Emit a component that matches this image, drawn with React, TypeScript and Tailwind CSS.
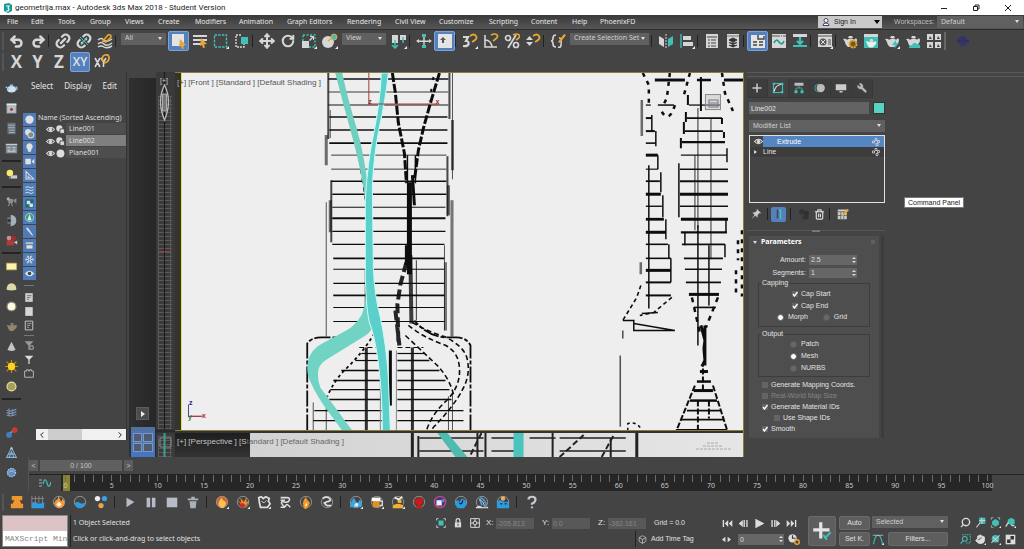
import React from 'react';
import { Link2, Undo2, Redo2, Box, Wrench, Move, RotateCw, Trash2, Hand, Search, Snowflake } from 'lucide-react';

const LIGHT = '#d6d6d6';
const TEAL = '#3fc1b8';
const GOLD = '#e8a634';

/* 16x16 drawings, keyed by name */
const teapot = (body: string) => (
  <path d="M1 6q3-1 4 1c2-2 6-2 7 0 1-2 3-2 3 0 0 3-2 4-3 5l-2 2H6L4 12C3 10 3 8 1 6zM7 3h3l1 2H6z" fill={body} />
);

function Link2Tilt() {
  return <g transform="rotate(-45 8 8)"><Link2 x={-1} y={-1} width={18} height={18} color={LIGHT} strokeWidth={3} /></g>;
}

const icons: Record<string, React.ReactNode> = {
  undo: <Undo2 x={0} y={1} width={15} height={15} color={LIGHT} strokeWidth={4} />,
  redo: <Redo2 x={1} y={1} width={15} height={15} color={LIGHT} strokeWidth={4} />,
  link: <Link2Tilt />,
  unlink: <><Link2Tilt /><path d="M3 2l10 12" stroke="#444" strokeWidth="3" /><path d="M4 4l8 8M5 12l6-8" stroke={TEAL} /></>,
  bind: <><path d="M1 7q3-3 6 0t8-1M1 11q3-3 6 0t8-1M1 14q3-2 6 0t8-1" fill="none" stroke={LIGHT} strokeWidth="1.500" /><path d="M6 8l5-6q3-1 3 2l-5 5z" fill="none" stroke={GOLD} strokeWidth="1.600" /></>,
  select: <><path d="M1 1h12v12H1z" fill="#e4e4e4" /><path d="M9 6l6 6-3 .5 1 3-2 .5-1-3-2 1z" fill={GOLD} /></>,
  byName: <><path d="M1 2h14v2H1zM1 6h14v2H1zM1 10h9v2H1z" fill={LIGHT} /><path d="M9 5l6 6-3 .5 1 3-2 .5-1-3-2 1z" fill={GOLD} /></>,
  region: <><rect x="1.500" y="2" width="12" height="12" fill="none" stroke={TEAL} strokeDasharray="2.500 1.200" strokeWidth="1.400" /><path d="M16 13v3h-3z" fill="#eee" /></>,
  crossing: <><path d="M7 2H2v12h8v-3" fill="none" stroke={LIGHT} strokeDasharray="2 1" strokeWidth="1.400" /><path d="M7 4h7v7H7z" fill={TEAL} /></>,
  move: <Move x={0} y={0} width={16} height={16} color={LIGHT} strokeWidth={3} />,
  rotate: <RotateCw x={1} y={1} width={14} height={14} color={LIGHT} strokeWidth={3.5} />,
  scale: <><path d="M2 2h12v12H2z" fill="none" stroke={TEAL} strokeDasharray="2 1.500" strokeWidth="1.400" /><path d="M1 8h7v7H1zM9 3h4v4h-1V5L9 8 8 7l3-3H9z" fill={LIGHT} /><path d="M16 13v3h-3z" fill="#eee" /></>,
  place: <><circle cx="6" cy="9" r="6" fill={LIGHT} /><path d="M6 8l5-4" stroke={GOLD} strokeWidth="1.500" /><circle cx="12" cy="4" r="3" fill={TEAL} stroke={GOLD} /><path d="M16 13v3h-3z" fill="#eee" /></>,
  pivot: <><path d="M1 2h6v8H1zM9 2h6v5H9z" fill={LIGHT} /><path d="M4 7v7M1 12l3 3 3-3M12 4v6" fill="none" stroke={TEAL} strokeWidth="1.500" /><path d="M16 13v3h-3z" fill="#eee" /></>,
  manipulate: <><path d="M0 8l3-2v4zM16 8l-3-2v4zM3 7.500h10v1.500H3z" fill={LIGHT} /><path d="M8 4v9" stroke={LIGHT} strokeWidth="1.400" /><path d="M6 1h4v3H6zM6 12h4v3H6z" fill={TEAL} /></>,
  keyboard: <><path d="M1 1h14v14H1z" fill="#e4e4e4" /><path d="M6 4l3 3H7v3H5V7H3z" fill="#555" /></>,
  snap: <><path d="M1 4h5L4 8c4 0 4 6-3 5" fill="none" stroke={LIGHT} strokeWidth="2.200" /><path d="M8 3q4-3 6 0t-4 6" fill="none" stroke={GOLD} strokeWidth="1.800" /><path d="M16 13v3h-3z" fill="#eee" /></>,
  angle: <><path d="M2 2v12h12M2 7q6 0 7 7" fill="none" stroke={LIGHT} strokeWidth="1.600" /><path d="M8 2q4-2 6 0t-4 6" fill="none" stroke={GOLD} strokeWidth="1.700" /></>,
  percent: <><path d="M12 2L4 15" stroke={LIGHT} strokeWidth="1.800" /><circle cx="4" cy="5" r="2.500" fill="none" stroke={LIGHT} strokeWidth="1.700" /><circle cx="12" cy="12" r="2.500" fill="none" stroke={LIGHT} strokeWidth="1.700" /><path d="M9 2q4-2 6 0t-3 5" fill="none" stroke={GOLD} strokeWidth="1.700" /></>,
  spinner: <><path d="M1 7l3.500-4L8 7zM1 9l3.500 4L8 9z" fill={LIGHT} /><path d="M8 3q4-3 6 0t-4 6" fill="none" stroke={GOLD} strokeWidth="1.800" /></>,
  braces: <><path d="M6 2q-3 0-3 3t-2 3q2 0 2 3t3 3M9 5q2 0 2 2t1 2q-1 0-1 3t-3 2" fill="none" stroke={LIGHT} strokeWidth="1.600" /><path d="M8 9l6-8 2 1-6 8z" fill={GOLD} /></>,
  mirror: <><path d="M1 3l5 3v8L1 11z" fill={LIGHT} /><path d="M8 1v14" stroke={LIGHT} strokeDasharray="2 1" /><path d="M15 3l-5 3v8l5-3z" fill={TEAL} /></>,
  align: <><path d="M2 1v14" stroke={TEAL} strokeWidth="1.400" /><path d="M4 3h8v4H4zM4 9h10v4H4z" fill={LIGHT} /><path d="M16 13v3h-3z" fill="#eee" /></>,
  list: <><path d="M2 1h12v14H2z" fill={LIGHT} /><path d="M3 4h10M4 7h2m1 0h5M4 10h2m1 0h5M4 13h2m1 0h5" stroke="#444" /></>,
  layers: <><path d="M2 1h12v14H2z" fill={LIGHT} /><path d="M2 3h12" stroke="#777" /><path d="M8 5l4 2-4 2-4-2zM4 9.500l4 2 4-2M4 12l4 2 4-2" fill="#333" stroke="#333" /></>,
  ribbon: <><path d="M1 2h14v13H1z" fill="#e4e4e4" /><path d="M8 2v4h6V3M3 9h4m2 0h4M3 12h4m2 0h4" stroke="#444" fill="none" strokeWidth="1.400" /></>,
  curve: <><path d="M1 1h14v14H1z" fill={LIGHT} /><path d="M1 3h14" stroke="#555" strokeDasharray="8 1 1 1" /><path d="M3 10q2-5 5-1t5-1" fill="none" stroke="#1f9c94" strokeWidth="1.700" /></>,
  schematic: <><path d="M1 1h14v3H1z" fill={LIGHT} /><path d="M8 4v7M5 8l3 3 3-3M1 13h14" fill="none" stroke={TEAL} strokeWidth="2.200" /></>,
  material: <><path d="M1 1h14v13H1z" fill={LIGHT} /><path d="M1 3h14M11 7h3m-3 2h3m-3 2h3" stroke="#555" /><circle cx="6" cy="9" r="3.500" fill="#555" /><path d="M4 7l4 4M8 7l-4 4" stroke="#ddd" /><path d="M16 13v3h-3z" fill="#eee" /></>,
  renderSetup: <>{teapot(LIGHT)}<circle cx="11" cy="11" r="3.500" fill="#7a5a1c" stroke={GOLD} strokeWidth="2" strokeDasharray="2 .7" /></>,
  renderFrame: <><path d="M1 1h14v14H1z" fill={TEAL} /><path d="M1 1h14v3H1z" fill={LIGHT} /><g transform="translate(2 4) scale(.75)">{teapot('#eee')}</g></>,
  render: <>{teapot(LIGHT)}<path d="M12 7l-4 5h3l-1 4 5-6h-3z" fill={TEAL} /><path d="M16 13v3h-3z" fill="#eee" /></>,
  renderCloud: <>{teapot(LIGHT)}<path d="M4 15q0-3 3-3 2-4 5-1 4 0 3 4z" fill={TEAL} /></>,
  gallery: <><path d="M1 1h6v6H1zM9 1h6v6H9zM1 9h6v6H1zM9 9h6v6H9z" fill={LIGHT} /><path d="M3 6l1-3 2 3zM11 6l1-3 2 3zM3 14l1-3 2 3zM11 14l1-3 2 3z" fill="#444" /></>,
  wave: <path d="M3 6v4M5 4v8M7 3v11M9 3v10M11 5v7M13 7v3M2 8h12" stroke="#2c2c72" strokeWidth="1.200" />,
};

const Svg = ({ children, className = 'w-4 h-4' }: { children: React.ReactNode; className?: string }) => (
  <svg viewBox="0 0 16 16" className={`${className} shrink-0`} aria-hidden="true">{children}</svg>
);

const ToolButton = ({ name, active }: { name: string; active?: boolean }) => (
  <button
    aria-label={name}
    className={`w-[21px] h-5 shrink-0 flex items-center justify-center rounded-xs border ${active ? 'bg-[#5480bd] border-[#7ba3d8]' : 'border-transparent'}`}
  >
    <Svg>{icons[name]}</Svg>
  </button>
);

const Sep = () => <span className="w-1 h-3 shrink-0 border-l border-[#222]" />;

const Select = ({ label, value, className }: { label: string; value: string; className: string }) => (
  <div className={`relative shrink-0 text-[7px] ${className}`}>
    <select aria-label={label} className="block appearance-none w-full h-full bg-[#606060] text-[#cfcfcf] pl-1 outline-none">
      <option>{value}</option>
    </select>
    <span className="absolute right-1 top-1/2 -mt-0.5 border-x-2 border-x-transparent border-t-3 border-t-[#ddd] pointer-events-none" />
  </div>
);

const menus = [
  ['File', 'w-6'], ['Edit', 'w-[27px]'], ['Tools', 'w-8'], ['Group', 'w-[35px]'], ['Views', 'w-[33px]'], ['Create', 'w-[37px]'],
  ['Modifiers', 'w-11'], ['Animation', 'w-12'], ['Graph Editors', 'w-[60px]'], ['Rendering', 'w-12'], ['Civil View', 'w-11'],
  ['Customize', 'w-[50px]'], ['Scripting', 'w-[42px]'], ['Content', 'w-[41px]'], ['Help', 'w-7'], ['PhoenixFD', 'w-12'],
];

function TitleBar() {
  return (
    <header className="h-[15px] bg-white text-[#222] flex items-center pl-1 shrink-0 font-['Roboto'] text-[8px]">
      <svg viewBox="0 0 8 10" className="w-2 h-[10px] mr-[3px]"><path d="M0 1l5-1 3 2v6l-4 2-4-2z" fill="#159a94" /><path d="M2 3h3L4 5q2 1 0 3H2" fill="none" stroke="#fff" strokeWidth="1.200" /></svg>
      <h1>geometrija.max - Autodesk 3ds Max 2018 - Student Version</h1>
      <div className="ml-auto mr-3 flex gap-6">
        <button aria-label="Minimize"><svg viewBox="0 0 8 8" className="w-2 h-2"><path d="M1 4.500h6" stroke="#222" /></svg></button>
        <button aria-label="Restore"><svg viewBox="0 0 8 8" className="w-2 h-2"><path d="M1.500 2.500h4v4h-4zM3 2V1h4v4H6" fill="none" stroke="#222" /></svg></button>
        <button aria-label="Close"><svg viewBox="0 0 8 8" className="w-2 h-2"><path d="M1 1l6 6M7 1L1 7" stroke="#222" /></svg></button>
      </div>
    </header>
  );
}

function MenuBar() {
  return (
    <nav className="h-[15px] shrink-0 flex items-center bg-linear-to-b from-[#3a3a3a] to-[#565656] border-b border-[#2c2c2c] pl-[7px] font-['Noto_Sans'] text-[7px] text-[#e8e8e8]">
      {menus.map(([name, width]) => (
        <button key={name} className={`${width} shrink-0 text-left whitespace-nowrap`}>{name}</button>
      ))}
      <button className="ml-auto shrink-0 w-16 h-3 bg-[#c9c9c9] text-[#222] flex items-center pl-1 font-['Liberation_Sans']">
        <Svg className="w-2 h-2 mr-1"><circle cx="8" cy="5" r="4" fill="#fff" stroke="#446" strokeWidth="2" /><path d="M2 15q0-5 6-5t6 5z" fill="#fff" stroke="#446" strokeWidth="2" /></Svg>
        Sign In
        <span className="ml-auto mr-0.5 border-x-3 border-x-transparent border-t-4 border-t-black" />
      </button>
      <span className="ml-3 w-[43px] shrink-0 text-[#bdbdbd] font-['Liberation_Sans']">Workspaces:</span>
      <Select label="Workspaces" value="Default" className="w-[86px] h-3 mr-px" />
    </nav>
  );
}

function MainToolbar() {
  const group = (...names: string[]) => names.map((n) => <ToolButton key={n} name={n} active={n === 'select' || n === 'keyboard' || n === 'ribbon'} />);
  return (
    <div className="shrink-0 font-['Noto_Sans']">
      <div className="h-[21px] flex items-center pl-0.5">
        <span className="w-1 h-[18px] shrink-0 border-l-2 border-[#555]" />
        {group('undo', 'redo')}<Sep />
        {group('link', 'unlink', 'bind')}<Sep />
        <Select label="Selection filter" value="All" className="w-[45px] h-3 mx-0.5 mb-1" />
        {group('select', 'byName', 'region', 'crossing')}<Sep />
        {group('move', 'rotate', 'scale', 'place')}
        <Select label="Reference coordinates" value="View" className="w-11 h-3 mx-0.5 mb-1" />
        {group('pivot')}<Sep />
        {group('manipulate', 'keyboard')}<Sep />
        {group('snap', 'angle', 'percent', 'spinner')}<Sep />
        {group('braces')}
        <Select label="Selection sets" value="Create Selection Set" className="w-[79px] h-3 mx-0.5 mb-1" />
        <Sep />
        {group('mirror', 'align')}<Sep />
        {group('list', 'layers')}<Sep />
        {group('ribbon', 'curve', 'schematic')}<Sep />
        {group('material')}<Sep />
        {group('renderSetup', 'renderFrame', 'render', 'renderCloud', 'gallery')}
        <span className="w-1 h-[18px] shrink-0 border-l-2 border-[#666] mr-1" />
        {group('wave')}
      </div>
      <div className="h-[21px] flex items-center pl-0.5 font-['Open_Sans'] font-bold text-[17px] leading-5 text-[#d6d6d6]">
        <span className="w-1 h-[18px] border-l-2 border-[#555]" />
        <button className="w-[21px]">X</button>
        <button className="w-[21px]">Y</button>
        <button className="w-[22px]">Z</button>
        <button className="w-5 h-5 bg-[#5480bd] border border-[#7ba3d8] rounded-xs text-[12px] leading-4 font-semibold text-[#e4e4e4]">XY</button>
        <button aria-label="Snap constraint" className="w-[21px] ml-px flex justify-center">
          <Svg><path d="M1 4l5 9M6 4l-5 9M7 4l2.500 4L12 4M9.500 8v5" fill="none" stroke={LIGHT} strokeWidth="1.600" /><path d="M9 8q-2-6 2-7t4 3-5 5" fill="none" stroke={GOLD} strokeWidth="1.800" /></Svg>
        </button>
      </div>
    </div>
  );
}

const disc = (fill: string, stroke: string) => <circle cx="8" cy="8" r="5.500" fill={fill} stroke={stroke} strokeWidth="1.500" />;

const sideGroups: React.ReactNode[][] = [
  [
    <><ellipse cx="8" cy="9" rx="5.500" ry="4" fill="#c9e4f1" /><path d="M1 6l4 3M13 6q3 0 1 4M6 4h4" stroke="#8fc0dc" strokeWidth="1.600" fill="none" /></>,
    <><path d="M2 2h12v12H2z" fill="#a9b4c0" /><path d="M2 2h12v2H2z" fill="#e3e8ee" /><path d="M4 6h8v6H4z" fill="#c4c4c4" /><circle cx="8" cy="9" r="2" fill="#a04545" /></>,
    <><path d="M3 1h10v14H3z" fill="#68727c" /><path d="M4 4h8M4 7h8M5 10h7M5 13h7" stroke="#b4bec8" /></>,
    <><path d="M1 2h14v12H1z" fill="#7d8791" /><path d="M1 3h14M3 7h4m2 0h4M3 10h4m2 0h4M3 12h10" stroke="#dce2e8" /></>,
  ],
  [<><circle cx="6" cy="6" r="4" fill="#f6ec6a" /><path d="M7 9h8v4H7z" fill="#c9c9c9" /><path d="M5 10h2v3H5z" fill="#8a8a8a" /></>],
  [
    <><path d="M4 6h6v5H4zM10 8l4-3v7z" fill="#8c8c8c" /><circle cx="4" cy="6" r="2" fill="#aaa" /><path d="M6 11l-2 4m4-4l1 4" stroke="#aaa" /></>,
    <><path d="M7 1a7 7 0 010 14z" fill="#a7b0b8" /><path d="M7 4H3v8h4" fill="#6d767e" /><circle cx="5" cy="8" r="2" fill="#333" /></>,
    <><path d="M2 8h9v6H2z" fill="#b83838" /><circle cx="5" cy="5" r="3" fill="#c98d8d" /><circle cx="11" cy="5" r="3" fill="#9b2f2f" /><path d="M11 10l4-2v5z" fill="#ccc" /></>,
  ],
  [
    <path d="M2 4h12v8H2z" fill="#faf3b4" stroke="#cfbf5a" />,
    <path d="M2 12q0-8 6-8t6 8q-6 2-12 0z" fill="#dcd9a4" />,
    disc('#fffde0', '#8a8a80'),
    <g transform="translate(1 1) scale(.9)">{teapot('#8f886c')}</g>,
    <path d="M8 2l5 10q-5 3-10 0z" fill="#c4c4c4" />,
    <><path d="M8 0v16M0 8h16M2 2l12 12M14 2L2 14" stroke="#c98a12" strokeWidth="1.500" /><circle cx="8" cy="8" r="4.500" fill="#ffd21f" /></>,
    disc('#a89f5a', '#e6dda0'),
  ],
  [
    <path d="M2 5q4 3 12-1M2 8q4 3 12-1M2 11q4 3 12-1M5 3v10M9 4v9" fill="none" stroke="#7e9bbb" strokeWidth="1.300" />,
    <><path d="M5 10l6-5" stroke="#999" strokeWidth="2" /><circle cx="5" cy="11" r="3.500" fill="#3f7fc4" /><circle cx="12" cy="5" r="3.500" fill="#c23c34" /></>,
    <><path d="M8 2L2 14h12zM4 10h8M5 14l3-7 3 7" fill="none" stroke="#89b1cf" strokeWidth="1.300" /><circle cx="8" cy="3" r="1.500" fill="#9cc4e0" /></>,
    <><circle cx="8" cy="8" r="5" fill="#5c8cc0" stroke="#a8c8e4" strokeWidth="1.500" strokeDasharray="2 1" /><path d="M5 8q3-4 6 0" stroke="#c8dcec" fill="none" /></>,
  ],
];

const circles = <><circle cx="6" cy="6" r="4.500" fill="#ddd" /><circle cx="10" cy="10" r="4.500" fill="#888" stroke="#eee" strokeWidth="1.300" /></>;

/* shape node in the object list */
const splineMark = <><circle cx="6" cy="6" r="5.500" fill="#ddd" /><path d="M7 7h8v8H7z" fill="#ddd" stroke="#444" strokeWidth="1.500" /></>;

const filters: React.ReactNode[] = [
  <circle cx="8" cy="8" r="6" fill="#e0e0e0" />,
  circles,
  <path d="M8 2a4.500 4.500 0 013 8l-1 4H6l-1-4a4.500 4.500 0 013-8z" fill="#e0e0e0" />,
  <path d="M2 4h8v8H2zM11 8l4-4v8z" fill="#e0e0e0" />,
  <path d="M3 2v11h11zM6 8v3h3" fill="none" stroke="#e0e0e0" strokeWidth="1.500" />,
  <path d="M2 5q3-2 6 0t6-1M2 9q3-2 6 0t6-1M2 13q3-2 6 0t6-1" fill="none" stroke="#e0e0e0" strokeWidth="1.400" />,
  <><path d="M2 2h12v12H2z" fill="#1d6a78" /><path d="M4 4h5v5H4zM8 8h5v5H8z" fill="#ddd" /></>,
  <><circle cx="8" cy="8" r="6" fill="#3b9a84" stroke="#cfe5df" /><path d="M8 3l3 9H5z" fill="#e8e8e8" /></>,
  <path d="M3 2l3 1 7 10-1 1-8-9z" fill="#e0e0e0" />,
  <path d="M2 3h12v3H2zM3 7h10v6H3z" fill="#e0e0e0" stroke="#4b6e9e" />,
  <Snowflake x={1} y={1} width={14} height={14} color="#e0e0e0" strokeWidth={2} />,
  <><path d="M1 8q7-8 14 0-7 8-14 0z" fill="#e0e0e0" /><circle cx="8" cy="8" r="2.500" fill="#345" /></>,
];

const Eye = () => <Svg className="w-[9px] h-[9px]"><path d="M1 8q7-8 14 0-7 8-14 0z" fill="none" stroke="#ddd" strokeWidth="2" /><circle cx="8" cy="8" r="3" fill="#ddd" /></Svg>;

function SideBar() {
  return (
    <aside className="w-[22px] shrink-0 flex flex-col items-center pt-1.5">
      {sideGroups.map((g, i) => (
        <React.Fragment key={i}>
          {i > 0 && <hr className="w-[19px] h-0 my-0.5 border-0 border-t-2 border-[#242424] shrink-0" />}
          {g.map((icon, j) => (
            <button key={j} aria-label={`Create tool ${i + 1}.${j + 1}`} className="h-5 flex items-center shrink-0"><Svg className="w-[13px] h-[13px]">{icon}</Svg></button>
          ))}
        </React.Fragment>
      ))}
    </aside>
  );
}

function SceneExplorer() {
  const rows = [['Line001', true], ['Line002', true], ['Plane001', false]] as const;
  return (
    <section className="w-[105px] shrink-0 flex flex-col border-r border-[#333] mb-[17px]">
      <div className="h-[41px] pt-[9px] pl-[9px] flex gap-[11px] font-['Noto_Sans'] text-[8px] leading-[10px] text-[#e4e4e4]">
        <button className="self-start">Select</button>
        <button className="self-start">Display</button>
        <button className="self-start">Edit</button>
      </div>
      <div className="flex-1 flex min-h-0">
        <div className="w-[14px] shrink-0 flex flex-col items-center gap-px">
          {filters.map((icon, i) => (
            <button key={i} aria-label={`Filter ${i + 1}`} className="w-[13px] h-[13px] shrink-0 bg-[#4f7cb8] flex items-center justify-center"><Svg className="w-[11px] h-[11px]">{icon}</Svg></button>
          ))}
          <hr className="w-[10px] border-[#777] my-1" />
          <Svg className="w-[10px] h-[13px]"><path d="M2 1h12v14H2z" fill="#ccc" /><path d="M5 5h7M5 8h5M5 11h3" stroke="#444" /></Svg>
          <Svg className="w-[10px] h-[13px]"><path d="M2 1h12v14H2z" fill="#d6d6d6" /></Svg>
          <Svg className="w-[10px] h-[13px]"><path d="M2 1h12v14H2z" fill="none" stroke="#ccc" strokeWidth="1.500" /><path d="M5 5h7M5 8h5M5 11h3" stroke="#ccc" /></Svg>
          <hr className="w-[10px] border-[#777] my-0.5" />
          <Svg className="w-[10px] h-[13px]"><path d="M1 1h14L9 8v7H7V8z" fill="#999" /><circle cx="12" cy="11" r="3" fill="none" stroke="#999" strokeWidth="2" /></Svg>
          <Svg className="w-[10px] h-[13px]"><path d="M1 2h14L9 8v7H7V8z" fill="#ddd" /></Svg>
          <Svg className="w-[10px] h-[13px]"><path d="M1 4h3V2h3v2h2V2h3v2h3v10H1z" fill="none" stroke="#bbb" strokeWidth="1.500" /></Svg>
        </div>
        <div className="flex-1 min-w-0 flex flex-col font-['Noto_Sans'] text-[7px] text-[#dedede]">
          <div className="h-[10px] leading-[10px] pl-0.5 whitespace-nowrap">Name (Sorted Ascending)</div>
          <ul>
            {rows.map(([name, spline]) => (
              <li key={name} className="h-3 flex items-center pl-2.5">
                <Eye />
                <Svg className="w-[9px] h-[9px] mx-px">{spline ? splineMark : <circle cx="8" cy="8" r="7" fill="#ddd" />}</Svg>
                <span className={`flex-1 h-3 leading-3 pl-[3px] border-b border-[#444] ${name === 'Line002' ? 'bg-[#7f7f7f]' : 'bg-[#4e4e4e]'}`}>{name}</span>
              </li>
            ))}
          </ul>
          <div className="mt-auto h-[11px] bg-[#f0f0f0] flex items-center text-[#333]">
            <button aria-label="Scroll left" className="w-3 flex justify-center"><svg viewBox="0 0 6 8" className="w-1 h-[6px]"><path d="M5 0L1 4l4 4" fill="none" stroke="#222" strokeWidth="1.500" /></svg></button>
            <span className="w-[34px] h-full bg-[#cdcdcd]" />
            <button aria-label="Scroll right" className="w-3 ml-auto flex justify-center"><svg viewBox="0 0 6 8" className="w-1 h-[6px]"><path d="M1 0l4 4-4 4" fill="none" stroke="#222" strokeWidth="1.500" /></svg></button>
          </div>
        </div>
      </div>
    </section>
  );
}

function LayoutTabs() {
  return (
    <div className="w-[27px] ml-0.5 mt-1.5 shrink-0 flex flex-col items-center bg-linear-to-r from-[#303030] to-[#272727]">
      <button aria-label="Open layout tabs" className="mt-auto mb-[7px] w-[13px] h-[13px] bg-[#4c4c4c] border border-[#5c5c5c] flex items-center justify-center">
        <svg viewBox="0 0 4 6" className="w-1 h-1.5"><path d="M0 0l4 3-4 3z" fill="#eee" /></svg>
      </button>
      <button aria-label="Layout" className="w-6 h-[30px] bg-[#4377c2] border-t-4 border-[#55719b] grid grid-cols-2 grid-rows-2 gap-px p-0.5 pb-1.5">
        {[0, 1, 2, 3].map((i) => <span key={i} className="h-[9px] bg-[#4d5c73] border border-[#8496b4]" />)}
      </button>
    </div>
  );
}

function SideViewport() {
  return (
    <svg viewBox="157 72 19 385" preserveAspectRatio="none" className="w-[19px] shrink-0" aria-hidden="true">
      <defs>
        <pattern id="grid" x="159" y="72" width="6" height="4" patternUnits="userSpaceOnUse">
          <path d="M0 .5h6M.5 0v4" stroke="#5a5a5a" />
        </pattern>
      </defs>
      <path d="M157 72h19v385h-19z" fill="#3a3a3a" />
      <path d="M159 96h14v334h-14z" fill="url(#grid)" />
      <path d="M165.500 72v358" stroke="#171717" />
      <path d="M159 251.500h13" stroke="#a03636" />
      <text x="161" y="83" fill="#ccc" fontSize="7" fontFamily="Liberation Sans">[+]</text>
      <path d="M165.500 85q-8 16 0 35 8-19 0-35z" fill="none" stroke="#bbb" strokeWidth="1.300" />
      <path d="M163.500 94h4v17h-4z" fill="#777" stroke="#aaa" />
      <path d="M157 431h19" stroke="#2a2a2a" strokeWidth="3" />
      <path d="M159 436h14v21h-14z" fill="url(#grid)" />
      <path d="M161 438h11v9h-11z" fill="none" stroke="#888" />
      <path d="M165.500 433v24" stroke="#3f9e92" strokeWidth="2" />
    </svg>
  );
}

/* [y, x1, x2, thickness] for every rung in the reference plane */
const rungs: number[][] = [
  [79, 329, 449, 1.3], [92, 329, 449, 0.8], [105, 329, 449, 1], [117, 330, 448, 1.5], [130, 330, 448, 1.5], [143, 330, 448, 1.5],
  [155, 332, 447, 0.8], [169, 332, 447, 0.8], [181, 332, 447, 1.5], [194, 333, 447, 1.5], [207, 333, 446, 1.2], [218, 333, 446, 2.2],
  [231, 333, 446, 1.3], [244, 333, 445, 1.2], [258, 334, 445, 1.6], [269, 334, 445, 1], [283, 334, 445, 1], [295, 334, 445, 1.8],
  [307, 334, 445, 1], [321, 334, 445, 1], [353, 362, 380, 1.2], [360, 356, 382, 1.2], [370, 342, 382, 1.6], [380, 334, 382, 1.6],
  [389, 331, 382, 1.3], [399, 330, 382, 1.5], [410, 315, 384, 1.4], [420, 314, 384, 1.4],
  [353, 398, 425, 1.2], [360, 398, 430, 1.3], [370, 398, 440, 1.4], [380, 398, 446, 1.6], [389, 398, 450, 1.3],
  [399, 398, 452, 1.5], [410, 398, 464, 1.4], [420, 398, 464, 1.2],
  [80, 655, 685, 3], [80, 697, 711, 2.5], [80, 724, 743, 3], [105, 689, 720, 1.3], [118, 687, 722, 1.6], [131, 685, 723, 1.8],
  [142, 682, 725, 2.2], [155, 681, 727, 1.2], [169, 680, 728, 1.5], [181, 680, 728, 2], [194, 680, 728, 3], [206, 680, 728, 1.6],
  [219, 681, 728, 2.8], [232, 681, 727, 2.2], [244, 682, 725, 1.8], [258, 684, 723, 1.6], [269, 685, 722, 1.5],
  [282, 686, 721, 1.6], [294, 689, 719, 3], [307, 694, 716, 1.6],
  [371, 700, 708, 3], [381, 697, 711, 2.5], [390, 694, 713, 3], [400, 690, 717, 2.5], [410, 687, 720, 1.8], [419, 681, 723, 1.8], [429, 676, 727, 1.5],
  [105, 658, 674, 1.5], [105, 646, 651, 1.3], [118, 646, 652, 2], [131, 646, 655, 2], [143, 646, 656, 1.6], [155, 646, 658, 3], [169, 646, 658, 1.2],
  [181, 646, 660, 1.8], [194, 646, 661, 3], [206, 646, 662, 1.4], [219, 646, 664, 2.8], [232, 646, 666, 3], [244, 646, 668, 1.6],
  [258, 646, 671, 1.6], [270, 646, 671, 3], [282, 646, 671, 2], [295, 646, 671, 2],
];

function FrontScene() {
  return (
    <svg viewBox="183 73 560 357" preserveAspectRatio="xMinYMin slice" className="absolute inset-0 w-full h-full" aria-hidden="true">
      <defs>
        <filter id="soft" filterUnits="userSpaceOnUse" x="183" y="60" width="600" height="420"><feGaussianBlur stdDeviation="0.7" /></filter>
      </defs>
      <g filter="url(#soft)" stroke="#111" fill="none">
        {rungs.map(([y, a, b, w], i) => <path key={i} d={`M${a} ${y}H${b}`} strokeWidth={w} />)}

        {/* tower rails */}
        <path d="M329 73v66M450 73v46M332 180v62M448 156v60" strokeWidth="2" opacity=".75" />
        <path d="M327 135v30M453 120v50M331 200v32M449 185v30" strokeWidth="3" opacity=".6" />
        <path d="M327 202v134M445 245v85M453 73v106M331 110v28" opacity=".7" />
        <path d="M452.500 200v136M446 262v68" strokeWidth="3" opacity=".55" />
        <path d="M366 270v60M370 245v70M417 260v60" strokeWidth="1.200" opacity=".7" />

        {/* crossing ribs */}
        <path d="M338 73l14 48 9 40 7 45" strokeWidth="3" strokeDasharray="5 4" />
        <path d="M393 73l3 20 3 30 6 30 2 30M440 73l-9 30-7 25-5 22-4 30" strokeWidth="3" strokeDasharray="9 2" />
        <path d="M434 77l-4 24" strokeWidth="2" strokeDasharray="3 9" />
        <path d="M408 155v28M416 155v28" strokeWidth="1.500" />
        <path d="M410 182v92" strokeWidth="5" />
        <path d="M413 175l2 30M407 245v20" strokeWidth="3" />
        <path d="M411 255l1 68" strokeWidth="4" opacity=".8" />
        <path d="M407 262l-6 22-3 20 1 38M396 310l4 35" strokeWidth="4" strokeDasharray="10 4" opacity=".9" />

        {/* pod outline */}
        <path d="M308 430v-87q4-6 14-6h17q12-2 20-13M471 430v-85q-4-8-14-8h-12q-18-2-30-17" strokeWidth="1.800" strokeDasharray="16 2 4 2" />
        <path d="M314 402v28M327 396v34M449 396v34M453 392v38" opacity=".7" />
        <path d="M367 347v83M413 347v83" strokeWidth="3" opacity=".85" />
        <path d="M391 350v55" strokeWidth="3" />
        <path d="M381 345v85M397 350v80" stroke="#888" />
        <path d="M375 333q-12 20-30 37-10 10-17 26" strokeWidth="1.800" strokeDasharray="3 3" />
        <path d="M406 335q17 16 33 31 12 14 15 28M409 325q15 12 35 19 15 6 16 24t-13 32q-15 14-20 30M413 322q17 10 32 14 18 9 22 20 5 17-4 33-8 16-32 41" strokeWidth="1.600" strokeDasharray="5 3" />
        <path d="M360 347h22M398 347h26" strokeDasharray="5 3" />

        {/* side figure */}
        <path d="M698 108v120M711 118v140M695 155v75M711 131v128" opacity=".85" />
        <path d="M698 225v120M709 245v60M649 165v143M685 232v13M726 219v13M725 244v13M679 163v54M727 148v14" strokeWidth="1.500" />
        <path d="M701 77v34M688 95v10M686 112v10M684 122v12M681 138v10M722 118v6M724 132v6" strokeWidth="2" />
        <path d="M642 100v36M641 262v12" strokeWidth="2.500" opacity=".6" />
        <path d="M652 115v16M656 131v15M658 155v14M661 172v20M663 195v22M666 219v20M669 244v14M671 258v24" strokeWidth="1.500" />
        <path d="M643 73l6 12v20M670 73l-3 25-4 8M675 105q-6 20-14 5M690 73l-7 26M722 73l3 20 8 18M742 230v66M738 240v20M736 270v24" strokeWidth="2.500" strokeDasharray="4 5" />
        <path d="M641 285l-4 12-14 23M672 297l-18 15-14 3" strokeWidth="1.600" strokeDasharray="4 3" />
        <path d="M623 320h11v10h41l-41-7M642 313l16-1" strokeWidth="1.500" />
        <path d="M623 330v8M620.500 355v71" opacity=".7" strokeWidth="1.500" />
        <path d="M692 297l8 36M718 297l-12 30" strokeWidth="2.500" strokeDasharray="5 5" />
        <path d="M701 325l4 15-1 8 1 12-3 6M705 325v40" strokeWidth="3" />
        <path d="M703 368v22M698 400v30M709 400v18M695 385l-18 44M713 385l14 44" strokeWidth="2" strokeDasharray="6 2" />
        <path d="M628 430v-7q8-3 14 6" strokeDasharray="3 3" strokeWidth="1.500" />
      </g>

      {/* extruded splines */}
      <path d="M336 73h7q5 24 14 54 9 30 13 72v30l-3-20q-4-36-14-72Q344 105 336 73z" fill="#70d0c0" />
      <path d="M368 275q-1 30-6 40-7 11-15 15l-24 13q-15 8-15 25 0 8 5 17 4 9 13 22l17 23h10l-20-27-12-16q-3-8-2-17 1-7 10-12l34-21q9-5 11-12z" fill="#70d3c4" />
      <path d="M389 73q-3 28-9 54-6 30-7 60l1 80q1 28 7 50 6 28 8 60l2 53h-8q0-35-4-68-4-28-9-40-4-18-4-55V200q2-38 9-70 6-30 7-57z" fill="#5bd0ca" stroke="#c9fbf6" />

      <rect x="705.500" y="94.500" width="15" height="15" fill="#bbb" fillOpacity=".4" stroke="#888" />
      <path d="M709 100h9v7h-9zM709 103h9" fill="none" stroke="#778" />
      <path d="M369.500 73v31h70" fill="none" stroke="#a33c3c" />
      <path d="M189.500 404v12h13" fill="none" stroke="#4a4a98" />
      <path d="M192 415.500h12" stroke="#b44" />
      <g fontFamily="Liberation Sans" fontSize="7" fontWeight="bold">
        <text x="369" y="104" fill="#833">z</text>
        <text x="436" y="104" fill="#a33">x</text>
        <text x="190" y="404" fill="#228">z</text>
        <text x="189" y="418" fill="#474">y</text>
        <text x="203" y="417" fill="#b33">x</text>
      </g>
    </svg>
  );
}

function PerspectiveScene() {
  return (
    <svg viewBox="251 433 492 24" preserveAspectRatio="xMinYMin slice" className="w-full h-full" aria-hidden="true">
      <g filter="url(#soft)" stroke="#222" fill="none">
        <path d="M413 433v24M637 433v24" strokeWidth="3" />
        <path d="M419 436v21M478 433v24M486 433v24M520 433v24M553 433v24M611 438v19" strokeWidth="2" />
        <path d="M420 438h64M420 451h64M492 438h30M492 451h30M530 438h26M560 438h66M560 451h66" strokeWidth="1.500" />
        <path d="M482 433l-12 24M560 457l24-22M602 457l12-22" strokeWidth="2" strokeDasharray="6 3" />
      </g>
      <path d="M438 433h10l20 24h-12z" fill="#4dbcae" />
      <path d="M514 433h10v24h-10z" fill="#4cc3bd" />
      <path d="M696 449h36M703 446h20M707 443h12" stroke="#aaa" strokeDasharray="3 1" />
    </svg>
  );
}

function Viewports() {
  return (
    <main className="flex-1 min-w-0 flex flex-col border-r border-[#8a7a40] font-['Liberation_Sans'] text-[8px] leading-[10px] whitespace-nowrap">
      <div className="flex-1 relative flex bg-[#35342c] border-y border-[#8a7c3c] pl-1.5">
        <div className="relative flex-1 bg-[#eee] border-l border-[#e8e04a] overflow-hidden">
          <FrontScene />
        </div>
        <span className="absolute left-0.5 top-[5px] text-[#555]"><span className="text-[#aaa]">[</span>+] [Front ] [Standard ] [Default Shading ]</span>
      </div>
      <div className="h-0.5 bg-[#333]" />
      <div className="h-6 relative flex bg-[#2b2b2b]">
        <div className="w-[75px] shrink-0 bg-linear-to-b from-[#1e1e1e] to-[#333]" />
        <div className="flex-1 bg-linear-to-r from-[#d2d2d2] to-[#e6e6e6] overflow-hidden"><PerspectiveScene /></div>
        <span className="absolute left-0.5 top-1 text-[#666]"><span className="text-[#c4c4c4]">[+] [Perspective ] [S</span>tandard ] [Default Shading ]</span>
      </div>
    </main>
  );
}

const Check = ({ label, checked, disabled, className = '' }: { label: string; checked?: boolean; disabled?: boolean; className?: string }) => (
  <label className={`flex items-center h-[11px] ${disabled ? 'text-[#858585]' : ''} ${className}`}>
    <span className="relative w-[6px] h-[6px] mr-[3px]">
      <input type="checkbox" defaultChecked={checked} disabled={disabled} className="block appearance-none w-full h-full bg-[#646464] peer" />
      <svg viewBox="0 0 6 6" className="absolute inset-0 w-[6px] h-[6px] hidden peer-checked:block pointer-events-none"><path d="M1 3l1.500 2L5.500 1" fill="none" stroke="#fff" strokeWidth="1.300" /></svg>
    </span>
    {label}
  </label>
);

const Radio = ({ label, name, checked, className = '' }: { label: string; name: string; checked?: boolean; className?: string }) => (
  <label className={`flex items-center gap-1 ${className}`}>
    <input type="radio" name={name} defaultChecked={checked} className="appearance-none w-[7px] h-[7px] rounded-full bg-[#686868] border border-[#5c5c5c] checked:bg-white" />
    {label}
  </label>
);

const Spinner = ({ label, value, className }: { label: string; value: string; className: string }) => (
  <span className={`relative ${className}`}>
    <input aria-label={label} defaultValue={value} className="block w-full h-full bg-[#666] text-[#ddd] pl-0.5 outline-none" />
    <svg viewBox="0 0 4 8" className="absolute right-px top-1/2 -mt-1 w-1 h-2 pointer-events-none"><path d="M0 3l2-2 2 2zM0 5l2 2 2-2z" fill="#ddd" /></svg>
  </span>
);

const Dots = () => <Svg className="w-2 h-2"><path d="M6 1h4v4H6zM1 6h4v4H1zM11 5h4v4h-4zM8 11h4v4H8z" fill="none" stroke="#ddd" strokeWidth="1.500" /></Svg>;

const tabs: React.ReactNode[] = [
  <path d="M8 2v12M2 8h12" stroke="#ccc" strokeWidth="2" />,
  <><path d="M2 2h12v12H2z" fill="none" stroke={TEAL} strokeWidth="1.500" /><path d="M3 13Q4 4 13 3" fill="none" stroke="#ddd" strokeWidth="1.500" /><path d="M1 1h3v3H1zM12 1h3v3h-3zM1 12h3v3H1zM12 12h3v3h-3z" fill={TEAL} /></>,
  <><path d="M2 1h12v4H2z" fill="#bbb" /><path d="M8 5v3M4 11V8h8v3" fill="none" stroke={TEAL} /><path d="M2 11h4v4H2zM10 11h4v4h-4z" fill={TEAL} /></>,
  <><circle cx="6" cy="8" r="5" fill="none" stroke={TEAL} /><circle cx="9" cy="8" r="5.500" fill="#bbb" /></>,
  <path d="M1 3h14v8H1zM6 12h4v2H6z" fill="#ccc" />,
  <g transform="translate(16 0) scale(-1 1)"><Wrench x={1} y={1} width={14} height={14} color="#bbb" fill="#bbb" strokeWidth={1.5} /></g>,
];

function CommandPanel() {
  return (
    <aside className="relative w-[280px] shrink-0 pl-[3px] font-['Liberation_Sans'] text-[7px] leading-[10px] text-[#e2e2e2]">
      <div className="h-[5px] border-y border-[#5a5a5a] mb-0.5" />
      <div className="w-[138px]">
        <div className="flex h-[19px] border-b border-[#383838] bg-[#3d3d3d] w-[126px]">
          {tabs.map((icon, i) => (
            <button key={i} aria-label={`Panel tab ${i + 1}`} className={`w-[21px] flex items-center justify-center border-r border-[#383838] ${i === 1 ? 'bg-[#444]' : ''}`}><Svg className="w-3 h-3">{icon}</Svg></button>
          ))}
        </div>
        <div className="flex mt-1 ml-0.5 gap-1">
          <input aria-label="Object name" defaultValue="Line002" className="w-[120px] h-3 bg-[#636363] pl-0.5 outline-none" />
          <button aria-label="Object color" className="w-3 h-3 bg-[#56d3c2] border border-[#333]" />
        </div>
        <Select label="Modifier list" value="Modifier List" className="w-[136px] h-3 ml-0.5 mt-1.5" />
        <ul className="ml-0.5 mt-[3px] w-[136px] h-[68px] border border-[#e0e0e0]">
          <li className="h-[11px] flex items-center pl-1 pr-1">
            <Eye />
            <span className="flex-1 -mr-1 pr-1 h-full bg-[#5686c2] text-white flex items-center justify-between pl-[14px]">Extrude<Dots /></span>
          </li>
          <li className="h-[11px] flex items-center pl-1 pr-1 bg-[#3c3c3c] border-b border-[#484848]">
            <svg viewBox="0 0 4 6" className="w-[3px] h-1 mr-1.5"><path d="M0 0l4 3-4 3z" fill="#eee" /></svg>
            <span className="flex-1">Line</span><Dots />
          </li>
        </ul>
        <div className="flex items-center h-[22px] ml-0.5 gap-1">
          <button aria-label="Pin stack" className="w-3.5 flex justify-center"><Svg className="w-3 h-3"><path d="M9 1l6 6-3 0-2 3v3L7 10l-5 5 4-6-3-3h3l3-2z" fill="#ccc" /></Svg></button>
          <Sep />
          <button aria-label="Show end result" className="w-[15px] h-[15px] -ml-1 bg-[#5480bd] rounded-xs flex items-center justify-center"><Svg className="w-3 h-3"><path d="M6 2v12" stroke="#444" strokeWidth="2" /><path d="M8 2h3v13H9V4H8z" fill={TEAL} /></Svg></button>
          <Sep />
          <button aria-label="Make unique" className="w-3"><Svg className="w-3 h-3"><circle cx="5" cy="5" r="3.500" fill="#333" /><circle cx="11" cy="7" r="3.500" fill="#303030" /><path d="M6 10h8v5H6z" fill="#333" /></Svg></button>
          <button aria-label="Remove modifier"><Trash2 size={11} color="#ddd" strokeWidth={2.5} /></button>
          <Sep />
          <button aria-label="Configure sets"><Svg className="w-3 h-3"><path d="M1 2h12v13H1z" fill="#ccc" /><path d="M1 5h12M5 5v10M9 5v10M1 10h12" stroke="#555" /><path d="M6 10l8-9 2 2-8 8z" fill={GOLD} /></Svg></button>
        </div>
        <div className="h-[11px] flex items-center justify-center"><span className="flex-1 border-t border-[#555]" /><span className="w-2 h-0.5 bg-[#777]" /><span className="flex-1 border-t border-[#555]" /></div>
        <div className="flex ml-0.5">
          <section className="w-[130px] bg-[#4e4e4e] pb-1">
            <h2 className="flex items-center h-3 font-bold text-white pl-1 font-['Noto_Sans']">
              <span className="mr-1 border-x-2 border-x-transparent border-t-3 border-t-[#ddd]" />Parameters
              <span className="ml-auto mr-1 w-1 h-1 bg-[#606060]" />
            </h2>
            <div className="flex flex-col gap-0.5 mt-[6px]">
              <label className="flex items-center h-[11px]"><span className="w-[57px] text-right mr-[3px]">Amount:</span><Spinner label="Amount" value="2.5" className="w-12 h-[10px]" /></label>
              <label className="flex items-center h-[11px]"><span className="w-[57px] text-right mr-[3px]">Segments:</span><Spinner label="Segments" value="1" className="w-12 h-[10px]" /></label>
            </div>
            <fieldset className="mx-[9px] mt-0 border border-[#3c3c3c] h-[49px]">
              <legend className="ml-0.5 px-px">Capping</legend>
              <Check label="Cap Start" checked className="pl-[33px]" />
              <Check label="Cap End" checked className="pl-[33px] mt-px" />
              <div className="flex pl-[18px] mt-px gap-[15px]">
                <Radio name="cap" label="Morph" checked /><Radio name="cap" label="Grid" />
              </div>
            </fieldset>
            <fieldset className="mx-[9px] mt-0.5 border border-[#3c3c3c] h-[48px]">
              <legend className="ml-0.5 px-px">Output</legend>
              <div className="pl-[31px] flex flex-col gap-0.5">
                <Radio name="out" label="Patch" /><Radio name="out" label="Mesh" checked /><Radio name="out" label="NURBS" />
              </div>
            </fieldset>
            <div className="pl-[13px] mt-0.5">
              <Check label="Generate Mapping Coords." />
              <Check label="Real-World Map Size" disabled />
              <Check label="Generate Material IDs" checked />
              <Check label="Use Shape IDs" className="pl-3" />
              <Check label="Smooth" checked />
            </div>
          </section>
          <span className="w-[3px] ml-0.5 bg-[#3c3c3c]" />
        </div>
      </div>
      <div role="tooltip" className="absolute left-[160px] top-[125px] h-[11px] px-[3px] bg-white border border-[#777] text-[#222] leading-[9px] whitespace-nowrap">Command Panel</div>
    </aside>
  );
}

function Timeline() {
  return (
    <section className="shrink-0 ml-1.5 font-['Noto_Sans'] text-[7px] text-[#c8c8c8] border-l border-[#555]">
      <div className="h-[17px] flex items-center gap-0.5 font-['Liberation_Sans']">
        <button className="w-[9px] h-[11px] bg-[#5c5c5c] leading-[10px]">&lt;</button>
        <button className="w-[82px] h-[11px] bg-[#606060] leading-[10px]">0 / 100</button>
        <button className="w-[9px] h-[11px] bg-[#5c5c5c] leading-[10px]">&gt;</button>
      </div>
      <div className="h-[17px] flex border-t border-[#222]">
        <button aria-label="Open mini curve editor" className="w-8 shrink-0 flex items-center justify-center">
          <svg viewBox="0 0 12 8" className="w-3 h-2"><path d="M0 1h3M0 4h3M0 7h3" stroke="#aaa" /><path d="M4 5q2-8 4-1t4-1" fill="none" stroke={TEAL} strokeWidth="1.200" /></svg>
        </button>
        <div className="flex-1 mr-8 bg-[#262626] flex">
          {Array.from({ length: 101 }, (_, i) => (
            <span key={i} className={`flex-1 basis-0 min-w-0 flex flex-col items-center ${i === 0 ? 'bg-linear-to-r from-transparent from-20% via-[#8b842e] via-20% to-[#8b842e] to-80%' : ''}`}>
              <span className={`w-px bg-[#6c6c6c] ${i % 5 === 0 ? 'h-[6px]' : 'h-[7px]'}`} />
              {i % 5 === 0 && <span className="leading-[9px] whitespace-nowrap">{i}</span>}
            </span>
          ))}
        </div>
      </div>
    </section>
  );
}

const ring = <circle cx="8" cy="8" r="6.500" fill="none" stroke="#999" />;
const corner = <path d="M16 13v3h-3z" fill="#eee" />;

const fluidGroups: React.ReactNode[][] = [
  [
    <path d="M2 1h12v5h-3l2 4h2v5H1v-5h2l2-4H2z" fill="#f0962e" />,
    <><path d="M1 9q3-2 6 0t8-1v7H1z" fill="#2f9be0" /><path d="M1 1v14M5 1v8M9 1v8M13 1v8M1 4h14" stroke="#888" /></>,
    <>{ring}<path d="M2 8q2 2 2-3 3 2 3-4 3 4 3 6 2 0 2-3 3 3 2 7-2 4-6 4T2 8z" fill="#f39a3c" /><path d="M5 11q3-6 6 0-3 4-6 0z" fill="#fff3dc" /></>,
    <>{ring}<path d="M2 9q3-2 6 0t6-1q-1 7-6 7t-6-6z" fill="#2f9be0" /></>,
    <><circle cx="4" cy="4" r="3" fill="#eee" /><circle cx="12" cy="4" r="3" fill="#36a3e6" /><circle cx="8" cy="12" r="3" fill="#f0a048" /></>,
  ],
  [
    <path d="M4 3l9 5-9 6z" fill="#b6bcc6" />,
    <path d="M3 3h4v11H3zM9 3h4v11H9z" fill="#b6bcc6" />,
    <path d="M2 3h12v11H2z" fill="#b6bcc6" />,
    <path d="M2 4h12v2H2zM6 2h4v2H6zM4 7h8l-1 8H5z" fill="#aab0b8" />,
  ],
  [
    <><circle cx="8" cy="8" r="6.500" fill="#d2652a" stroke="#999" /><path d="M4 11q0-5 4-8 0 3 3 4t0 6-7-2z" fill="#ffc14f" />{corner}</>,
    <>{ring}<path d="M8 14L2 6l4 3-1-6 4 5 3-6v6l3-1-4 6z" fill="#f08a2e" /><path d="M3 12q4-6 8 0l-3 3z" fill="#c92c20" />{corner}</>,
    <><path d="M2 3l3-1 2 2 3-2 4 2-1 3 2 3-3 4H4l-1-4z" fill="none" stroke="#ddd" strokeWidth="2" /><path d="M5 7l3 2 3-3" stroke="#ddd" fill="none" />{corner}</>,
    <path d="M3 3h7q4 0 3 3t-6 2-2 3 4 1 5 2M3 6h5M3 14h5" fill="none" stroke="#ddd" strokeWidth="1.800" />,
    <>{ring}<path d="M5 12Q3 8 8 2q0 3 3 5t-1 7-5-2z" fill="#f59a24" /><path d="M7 13q0-3 2-4 1 3-2 4z" fill="#fff" /></>,
    <>{ring}<path d="M3 4q5-3 8 0t-4 4q-3 2 1 4h5M4 9h3" fill="none" stroke="#ddd" strokeWidth="2" /></>,
  ],
  [
    <>{ring}<path d="M1 14q1-8 5-11 1 4 4 6 2-4 3-3 3 5 1 8z" fill="#3ea5de" /><path d="M6 13q0-4 3-4t1 4" fill="#d6eefa" />{corner}</>,
    <>{ring}<path d="M3 5h8v9H3z" fill="#dd9226" /><path d="M11 7h3v5h-3" fill="none" stroke="#ddd" strokeWidth="1.500" /><path d="M2 3h10v4H2z" fill="#fff" />{corner}</>,
    <>{ring}<path d="M2 12q6-4 12 0v3H2zM7 5h5v4H8z" fill="#f0b232" /><path d="M4 3l5 2 4-3" stroke="#eee" fill="none" strokeWidth="2" />{corner}</>,
    <>{ring}<path d="M3 4l3 1 2-3 3 3 3-2-2 6-3 2 3 4H4l3-4-4-2z" fill="#d41616" /></>,
    <><circle cx="8" cy="8" r="6.500" fill="#473a78" stroke="#c14a80" strokeWidth="1.500" /><path d="M4 6h6v6H4z" fill="#eef" /><path d="M10 5h3v3h-3z" fill="#5b8be0" /></>,
    <>{ring}<path d="M1 8q3-4 5 0 2-3 3-4l4 2q3 6-2 9H4Q1 12 1 8z" fill="#2a9bdc" /><path d="M6 9q3 3 4-3" stroke="#124" strokeWidth="1.500" fill="none" /></>,
    <>{ring}<path d="M1 14q3-3 6-1t8 0v2H1z" fill="#ddd" /><path d="M6 3q6 2 7 10M5 4l3 8" stroke="#4b9bd0" fill="none" strokeWidth="2" /><path d="M5 5q5 2 6 8" stroke="#ddd" fill="none" /></>,
    <>{ring}<circle cx="8" cy="4" r="2.500" fill="#e9b063" /><path d="M1 7q4-2 7 0t7 0v8H1z" fill="#2d9bdd" /><path d="M5 10h2m3 0h2" stroke="#134" strokeWidth="1.500" /></>,
  ],
  [<path d="M4 5q0-3 4-3t4 3-4 5v1M8 13v2" fill="none" stroke="#c4cad0" strokeWidth="2.500" />],
];

function FluidToolbar() {
  return (
    <div className="h-[22px] shrink-0 flex items-center pl-0.5">
      <span className="w-1 h-[17px] border-l-2 border-[#555]" />
      {fluidGroups.map((g, i) => (
        <React.Fragment key={i}>
          {i > 0 && <span className="w-[5px] ml-[3px] h-3 border-l border-[#222]" />}
          {g.map((icon, j) => (
            <button key={j} aria-label={`Fluid tool ${i + 1}.${j + 1}`} className="w-[21px] h-5 flex items-center justify-center"><Svg className="w-[14px] h-[14px]">{icon}</Svg></button>
          ))}
        </React.Fragment>
      ))}
    </div>
  );
}

const playback = ['M1 3h2v10H1zM9 3v10L4 8zM15 3v10l-5-5z', 'M7 3v10L1 8zM8 3h2v10H8zM12 3h2v10h-2z', 'M2 1l13 7-13 7z', 'M2 3h2v10H2zM6 3h2v10H6zM9 3v10l6-5z', 'M1 3v10l5-5zM7 3v10l5-5zM13 3h2v10h-2z'];

const navIcons: React.ReactNode[] = [
  <g transform="translate(16 0) scale(-1 1)"><Search x={0} y={0} width={16} height={16} color="#ddd" strokeWidth={3} /></g>,
  <><path d="M6 1h9v9H6z" fill={TEAL} /><path d="M10 1v9M6 5h9M7 9l-5 6" stroke="#ccc" strokeWidth="1.500" /></>,
  <><path d="M2 4V1h3M11 1h3v3M2 12v3h3" fill="none" stroke="#ccc" /><path d="M8 3l5 3v5l-5 3-5-3V6z" fill={TEAL} />{corner}</>,
  <><path d="M9 1l5 3v6l-5 2-5-3V4z" fill={TEAL} /><path d="M5 8l-4 6M9 12l5 1" stroke="#ccc" strokeWidth="2" />{corner}</>,
  <><path d="M3 1h12v12H8" fill="none" stroke={TEAL} strokeDasharray="2 1.500" strokeWidth="1.500" /><circle cx="7" cy="7" r="3.500" fill="none" stroke={TEAL} strokeWidth="1.500" /><path d="M4 10l-3 4" stroke={TEAL} strokeWidth="1.500" /></>,
  <><Hand x={0} y={0} width={15} height={15} color="#ddd" fill="#ddd" strokeWidth={2} />{corner}</>,
  <><circle cx="8" cy="7" r="5.500" fill={TEAL} /><path d="M2 13L14 2M4 4l8 8" stroke="#ccc" strokeWidth="1.500" />{corner}</>,
  <><path d="M1 1h14v14H1z" fill="#ddd" /><path d="M8 3h5v5H8zM3 8h5v5H3z" fill="#333" /></>,
];

function Coord({ axis, value }: { axis: string; value: string }) {
  return (
    <label className="flex items-center">
      <span className="w-[10px] text-[8px]">{axis}:</span>
      <input defaultValue={value} className="w-[38px] h-[11px] bg-[#585858] text-[#858585] pl-px outline-none mr-2" />
    </label>
  );
}

function StatusBar() {
  const key = 'bg-[#5e5e5e] border border-[#6a6a6a] rounded-xs h-[14px] leading-[12px]';
  return (
    <footer className="h-9 shrink-0 flex pt-0.5 pb-0.5 pl-0.5 font-['Liberation_Sans'] text-[7px] text-[#e0e0e0]">
      <div className="w-[66px] shrink-0 flex flex-col border border-[#888]">
        <input aria-label="Macro recorder" className="w-full h-[15px] bg-[#dcc3c5] outline-none" />
        <input aria-label="MAXScript listener" defaultValue="MAXScript Mini" className="w-full h-[15px] bg-white text-[#888] font-['Liberation_Mono'] text-[8px] pl-0.5 outline-none" />
      </div>
      <div className="w-[362px] shrink-0 ml-0.5 pl-0.5 border-l border-[#222] flex flex-col justify-between font-['Noto_Sans'] leading-[16px]">
        <p>1 Object Selected</p>
        <p>Click or click-and-drag to select objects</p>
      </div>
      <div className="w-[290px] shrink-0 flex flex-col">
        <div className="h-4 flex items-center">
          <button aria-label="Isolate" className="w-[17px] flex justify-center"><Svg className="w-[10px] h-[10px]"><path d="M1 4V1h3M12 1h3v3M15 12v3h-3M4 15H1v-3" fill="none" stroke="#ccc" strokeWidth="1.500" /><path d="M4 4h8v8H4z" fill={TEAL} /></Svg></button>
          <button aria-label="Lock selection" className="w-[17px] flex justify-center"><Svg className="w-[10px] h-[10px]"><path d="M5 7V4q0-3 3-3t3 3v3" fill="none" stroke="#ddd" strokeWidth="2" /><path d="M3 7h10v8H3z" fill="#ddd" /><path d="M8 9v4" stroke="#444" strokeWidth="1.500" /></Svg></button>
          <button aria-label="Transform mode" className="w-[18px] flex justify-center mr-0.5"><Svg className="w-[10px] h-[10px]"><path d="M1 1h14v14H1zM8 1v14M1 8h14" fill="none" stroke="#ddd" strokeWidth="1.500" /><circle cx="8" cy="8" r="3" fill="#444" stroke="#ddd" strokeWidth="1.500" /></Svg></button>
          <Coord axis="X" value="-205.813" /><Coord axis="Y" value="0.0" /><Coord axis="Z" value="-362.161" />
          <span>Grid = 0.0</span>
        </div>
        <button className="mt-auto h-4 ml-[203px] pl-0.5 border-l border-[#222] flex items-center gap-1"><Box size={9} color="#ccc" strokeWidth={2} />Add Time Tag</button>
      </div>
      <div className="w-[82px] shrink-0 flex flex-col justify-between">
        <div className="h-4 flex items-center gap-[5px]">
          {playback.map((d, i) => <button key={i} aria-label={`Playback ${i + 1}`}><Svg className="w-[11px] h-[11px]"><path d={d} fill="#ddd" /></Svg></button>)}
        </div>
        <div className="h-4 flex items-center">
          <button aria-label="Key mode" className="w-4"><Svg className="w-[9px] h-[9px]"><path d="M6 3v10L0 8zM10 3v10l6-5z" fill="#ddd" /></Svg></button>
          <Spinner label="Current frame" value="0" className="w-[46px] h-[11px]" />
          <button aria-label="Time configuration" className="ml-1"><Svg className="w-3 h-3"><circle cx="6" cy="7" r="5.500" fill="#ddd" /><path d="M6 3v4h4" fill="none" stroke="#333" strokeWidth="1.500" /><circle cx="12" cy="12" r="3" fill="#444" stroke={GOLD} strokeWidth="2" /></Svg></button>
        </div>
      </div>
      <button aria-label="Set keys" className="w-7 h-[30px] mt-px ml-1 shrink-0 bg-[#5e5e5e] border border-[#6a6a6a] rounded-xs flex items-center justify-center">
        <Svg className="w-5 h-5"><path d="M7 1v13M1 7h13" stroke="#e4e4e4" strokeWidth="2.600" /><path d="M10 14l5-5M9 11l3 4" stroke={TEAL} strokeWidth="1.500" /></Svg>
      </button>
      <div className="w-[31px] ml-[3px] mt-px shrink-0 flex flex-col gap-0.5">
        <button className={key}>Auto</button>
        <button className={key}>Set K.</button>
      </div>
      <div className="w-[76px] ml-0.5 mt-px shrink-0">
        <Select label="Key set" value="Selected" className="w-full h-3 mb-1" />
        <div className="flex items-center gap-1">
          <button aria-label="Tangents"><Svg className="w-3 h-3"><path d="M2 15Q4 3 8 3t6 12" fill="none" stroke={TEAL} strokeWidth="1.500" /><path d="M1 3h14" stroke="#ccc" />{corner}</Svg></button>
          <button className={`flex-1 ${key}`}>Filters...</button>
        </div>
      </div>
      <div className="ml-auto mr-2 grid grid-cols-4 gap-x-1 content-between py-0.5">
        {navIcons.map((icon, i) => <button key={i} aria-label={`View tool ${i + 1}`}><Svg className="w-[11px] h-[11px]">{icon}</Svg></button>)}
      </div>
    </footer>
  );
}

function App() {
  return (
    <div className="min-h-screen bg-[#444] flex flex-col overflow-hidden">
      <TitleBar />
      <MenuBar />
      <MainToolbar />
      <div className="flex-1 flex">
        <SideBar />
        <div className="flex-1 min-w-0 flex flex-col">
          <div className="flex-1 flex">
            <SceneExplorer />
            <LayoutTabs />
            <SideViewport />
            <Viewports />
            <CommandPanel />
          </div>
          <Timeline />
        </div>
      </div>
      <FluidToolbar />
      <StatusBar />
    </div>
  );
}

export default App;
